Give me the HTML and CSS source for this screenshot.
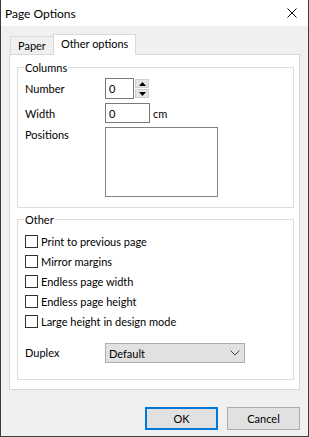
FILE: index.html
```html
<!DOCTYPE html>
<html lang="en">
<head>
  <meta charset="UTF-8" />
  <title>Page Options</title>
  <link rel="stylesheet" href="styles.css">
</head>
<body>
  <div class="window">
    <div class="titlebar">
      <span class="title">Page Options</span>
      <svg class="close" width="10" height="10" viewBox="0 0 10 10">
        <path d="M0.5 0.5 L9.5 9.5 M9.5 0.5 L0.5 9.5" stroke="#000" stroke-width="1" fill="none"/>
      </svg>
    </div>

    <div class="content">
      <div class="tabs">
        <div class="tab">Paper</div>
        <div class="tab active">Other options</div>
      </div>

      <div class="panel">
        <fieldset class="group">
          <legend>Columns</legend>
          <div class="columns-grid">
            <label>Number</label>
            <div class="spin-row">
              <input class="field num" type="text" value="0">
              <div class="spin">
                <div class="spin-btn">
                  <svg width="7" height="4" viewBox="0 0 7 4"><path d="M0 4 L3.5 0 L7 4 Z" fill="#000"/></svg>
                </div>
                <div class="spin-btn">
                  <svg width="7" height="4" viewBox="0 0 7 4"><path d="M0 0 L3.5 4 L7 0 Z" fill="#000"/></svg>
                </div>
              </div>
            </div>

            <label>Width</label>
            <div class="spin-row">
              <input class="field width" type="text" value="0">
              <span class="unit">cm</span>
            </div>

            <label class="top">Positions</label>
            <div class="listbox"></div>
          </div>
        </fieldset>

        <fieldset class="group other">
          <legend>Other</legend>
          <div class="checks">
            <label class="check"><span class="box"></span>Print to previous page</label>
            <label class="check"><span class="box"></span>Mirror margins</label>
            <label class="check"><span class="box"></span>Endless page width</label>
            <label class="check"><span class="box"></span>Endless page height</label>
            <label class="check"><span class="box"></span>Large height in design mode</label>
          </div>
          <div class="duplex-row">
            <label>Duplex</label>
            <div class="select">
              <span>Default</span>
              <svg width="10" height="6" viewBox="0 0 10 6"><path d="M0.5 0.5 L5 5 L9.5 0.5" stroke="#444" stroke-width="1" fill="none"/></svg>
            </div>
          </div>
        </fieldset>
      </div>

      <div class="buttons">
        <button class="btn default">OK</button>
        <button class="btn">Cancel</button>
      </div>
    </div>
  </div>
</body>
</html>
```

FILE: styles.css
```css
* {
  box-sizing: border-box;
}

body {
  margin: 0;
  font-family: Lato, "Noto Sans", sans-serif;
  font-size: 11px;
  color: #000;
  background: #f0f0f0;
}

.window {
  width: 309px;
  height: 437px;
  border: 1px solid #3c3c3c;
  border-top: none;
  background: #f0f0f0;
  display: flex;
  flex-direction: column;
}

.titlebar {
  height: 26px;
  background: #fff;
  display: flex;
  align-items: center;
  justify-content: space-between;
  padding: 0 11px 0 4px;
}

.title {
  font-size: 12px;
}

.close {
  display: block;
}

.content {
  padding: 8px 8px 0 8px;
  flex: 1;
  display: flex;
  flex-direction: column;
}

.tabs {
  display: flex;
  align-items: flex-end;
  padding-left: 1px;
  height: 20px;
  position: relative;
  z-index: 1;
}

.tab {
  height: 18px;
  padding: 0 7px;
  border: 1px solid #d9d9d9;
  border-bottom: none;
  background: #f0f0f0;
  line-height: 17px;
  margin-right: -1px;
}

.tab.active {
  height: 21px;
  background: #fff;
  padding: 0 7px 0 7px;
  margin-bottom: -1px;
  line-height: 17px;
}

.panel {
  background: #fff;
  border: 1px solid #d9d9d9;
  height: 336px;
  padding: 5px 5px 0 7px;
}

.group {
  margin: 0;
  border: 1px solid #dcdcdc;
  padding: 3px 7px 10px 7px;
  min-width: 0;
}

.group legend {
  padding: 0 1px;
  margin-left: -1px;
  line-height: 15px;
}

.columns-grid {
  display: grid;
  grid-template-columns: 80px 1fr;
  row-gap: 4px;
  align-items: center;
}

.columns-grid .top {
  align-self: start;
  margin-top: 1px;
}

.spin-row {
  display: flex;
  align-items: center;
}

.field {
  font: inherit;
  border: 1px solid #7a7a7a;
  background: #fff;
  padding: 0 3px;
  margin: 0;
  height: 21px;
  outline: none;
}

.field.num {
  width: 29px;
}

.field.width {
  width: 45px;
  height: 20px;
}

.unit {
  margin-left: 3px;
}

.spin {
  display: flex;
  flex-direction: column;
  gap: 1px;
  margin-left: 1px;
}

.spin-btn {
  width: 14px;
  height: 9px;
  background: #e5e5e5;
  border: 1px solid #cfcfcf;
  display: flex;
  align-items: center;
  justify-content: center;
}

.listbox {
  width: 113px;
  height: 70px;
  border: 1px solid #828282;
  background: #fff;
}

.other {
  margin-top: 4px;
  padding-top: 8px;
  padding-bottom: 16px;
}

.checks {
  display: flex;
  flex-direction: column;
  gap: 7px;
}

.check {
  display: flex;
  align-items: center;
  height: 13px;
}

.box {
  width: 13px;
  height: 13px;
  border: 1px solid #333;
  background: #fff;
  margin-right: 3px;
}

.duplex-row {
  display: flex;
  align-items: center;
  margin-top: 15px;
}

.duplex-row label {
  width: 80px;
  margin-top: -2px;
}

.select {
  width: 140px;
  height: 20px;
  background: #e1e1e1;
  border: 1px solid #adadad;
  display: flex;
  align-items: center;
  justify-content: space-between;
  padding: 0 4px 0 3px;
}

.buttons {
  display: flex;
  justify-content: flex-end;
  gap: 9px;
  padding: 17px 0 0 0;
}

.btn {
  font: inherit;
  width: 73px;
  height: 23px;
  background: #e1e1e1;
  border: 1px solid #adadad;
  padding: 0;
  margin: 0;
  color: #000;
}

.btn.default {
  border: 2px solid #0078d7;
}
```
